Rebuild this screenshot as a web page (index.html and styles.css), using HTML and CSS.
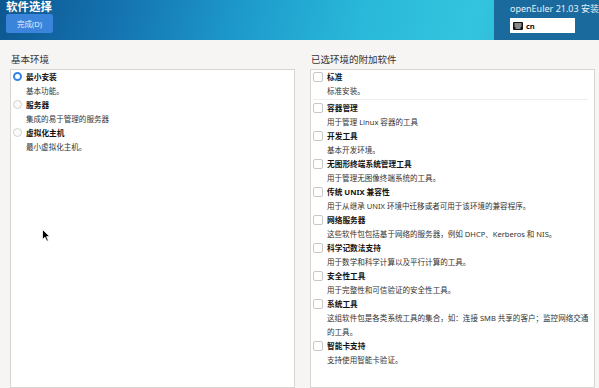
FILE: index.html
```html
<!DOCTYPE html>
<html lang="zh-CN">
<head>
  <meta charset="utf-8">
  <title>软件选择</title>
  <link rel="stylesheet" href="styles.css">
</head>
<body>
  <header class="topbar">
    <div class="topbar__left">
      <h1 class="topbar__title">软件选择</h1>
      <button class="done-btn">完成(D)</button>
    </div>
    <div class="topbar__right">
      <div class="product">openEuler 21.03 安装</div>
      <div class="kbd-box">
        <svg class="kbd-icon" width="10" height="8" viewBox="0 0 10 8">
          <rect x="0" y="0" width="10" height="8" rx="1" fill="#111"/>
          <rect x="1.5" y="1.5" width="7" height="1" fill="#fff"/>
          <rect x="1.5" y="3.5" width="7" height="1" fill="#fff"/>
          <rect x="2.5" y="5.5" width="5" height="1" fill="#fff"/>
        </svg>
        <span>cn</span>
      </div>
    </div>
  </header>

  <main class="content">
    <section class="column">
      <div class="column__label">基本环境</div>
      <div class="panel">
        <div class="item">
          <span class="radio radio--on"></span>
          <div class="item__text">
            <div class="item__title">最小安装</div>
            <div class="item__desc">基本功能。</div>
          </div>
        </div>
        <div class="item">
          <span class="radio"></span>
          <div class="item__text">
            <div class="item__title">服务器</div>
            <div class="item__desc">集成的易于管理的服务器</div>
          </div>
        </div>
        <div class="item">
          <span class="radio"></span>
          <div class="item__text">
            <div class="item__title">虚拟化主机</div>
            <div class="item__desc">最小虚拟化主机。</div>
          </div>
        </div>
      </div>
    </section>

    <section class="column">
      <div class="column__label">已选环境的附加软件</div>
      <div class="panel">
        <div class="item item--first">
          <span class="check"></span>
          <div class="item__text">
            <div class="item__title">标准</div>
            <div class="item__desc">标准安装。</div>
          </div>
        </div>
        <div class="item">
          <span class="check"></span>
          <div class="item__text">
            <div class="item__title">容器管理</div>
            <div class="item__desc">用于管理 Linux 容器的工具</div>
          </div>
        </div>
        <div class="item">
          <span class="check"></span>
          <div class="item__text">
            <div class="item__title">开发工具</div>
            <div class="item__desc">基本开发环境。</div>
          </div>
        </div>
        <div class="item">
          <span class="check"></span>
          <div class="item__text">
            <div class="item__title">无图形终端系统管理工具</div>
            <div class="item__desc">用于管理无图像终端系统的工具。</div>
          </div>
        </div>
        <div class="item">
          <span class="check"></span>
          <div class="item__text">
            <div class="item__title">传统 UNIX 兼容性</div>
            <div class="item__desc">用于从继承 UNIX 环境中迁移或者可用于该环境的兼容程序。</div>
          </div>
        </div>
        <div class="item">
          <span class="check"></span>
          <div class="item__text">
            <div class="item__title">网络服务器</div>
            <div class="item__desc">这些软件包包括基于网络的服务器，例如 DHCP、Kerberos 和 NIS。</div>
          </div>
        </div>
        <div class="item">
          <span class="check"></span>
          <div class="item__text">
            <div class="item__title">科学记数法支持</div>
            <div class="item__desc">用于数学和科学计算以及平行计算的工具。</div>
          </div>
        </div>
        <div class="item">
          <span class="check"></span>
          <div class="item__text">
            <div class="item__title">安全性工具</div>
            <div class="item__desc">用于完整性和可信验证的安全性工具。</div>
          </div>
        </div>
        <div class="item">
          <span class="check"></span>
          <div class="item__text">
            <div class="item__title">系统工具</div>
            <div class="item__desc">这组软件包是各类系统工具的集合，如：连接 SMB 共享的客户；监控网络交通的工具。</div>
          </div>
        </div>
        <div class="item">
          <span class="check"></span>
          <div class="item__text">
            <div class="item__title">智能卡支持</div>
            <div class="item__desc">支持使用智能卡验证。</div>
          </div>
        </div>
      </div>
    </section>
  </main>

  <!-- mouse pointer sitting over the left list -->
  <svg class="cursor" width="9" height="13" viewBox="0 0 9 13">
    <path d="M0.5 0.5 L0.5 10.5 L3 8.2 L4.8 12.2 L6.3 11.5 L4.6 7.6 L7.8 7.6 Z" fill="#000" stroke="#fff" stroke-width="0.8"/>
  </svg>
</body>
</html>
```

FILE: styles.css
```css
html,
body {
  margin: 0;
  height: 100%;
  overflow: hidden;
}

body {
  font-family: "Noto Sans", "Noto Sans CJK SC", sans-serif;
  background: #f6f5f4;
  color: #222;
}

/* header */
.topbar {
  height: 40px;
  display: flex;
  justify-content: space-between;
  background: linear-gradient(105deg, #0d5790 0%, #1473b0 20%, #1e9dcd 42%, #29b8d9 60%, #33c5df 78%, #26accf 100%);
}

.topbar__left {
  padding: 1px 0 0 6px;
}

.topbar__title {
  margin: 0;
  font-size: 11.5px;
  line-height: 12px;
  font-weight: bold;
  color: #fff;
}

.done-btn {
  display: block;
  margin-top: 1px;
  width: 47px;
  height: 19px;
  padding: 0;
  border: 0;
  border-radius: 2px;
  background: #3a84dc;
  color: #e8f0fb;
  font-family: inherit;
  font-size: 7.5px;
}

.topbar__right {
  width: 89px;
  background: #1b6a9e;
  padding: 3px 0 0 16px;
  overflow: hidden;
  white-space: nowrap;
}

.product {
  font-size: 9px;
  line-height: 12px;
  color: #e6f1f8;
}

.kbd-box {
  margin-top: 3px;
  width: 62px;
  height: 15px;
  background: #fff;
  display: flex;
  align-items: center;
  gap: 3px;
  padding-left: 3px;
  font-size: 7.5px;
  font-weight: bold;
  color: #111;
}

/* content */
.content {
  display: flex;
  gap: 15px;
  padding: 14px 4px 0 10px;
  height: calc(100% - 40px);
  box-sizing: border-box;
}

.column {
  flex: 1;
  display: flex;
  flex-direction: column;
}

.column__label {
  font-size: 9.5px;
  line-height: 12px;
  color: #333;
  margin-bottom: 3px;
  padding-left: 1px;
}

.panel {
  flex: 1;
  background: #fff;
  border: 1px solid #d6d5d4;
  padding: 1px 0 0 2px;
}

.item {
  display: flex;
  gap: 4px;
  padding-bottom: 1px;
}

.item--first {
  border-bottom: 1px solid #eeeeee;
  margin-bottom: 2px;
  margin-right: 6px;
}

.item__text {
  flex: 1;
}

.item__title {
  font-size: 7.7px;
  line-height: 13px;
  font-weight: bold;
  color: #111;
}

.item__desc {
  font-size: 7.55px;
  line-height: 14px;
  color: #333;
}

.radio {
  flex: none;
  width: 9px;
  height: 9px;
  margin-top: 1px;
  border-radius: 50%;
  border: 1px solid #cfcfcf;
  box-sizing: border-box;
  background: #fafafa;
}

.radio--on {
  border: 2.5px solid #3584e4;
  background: #fff;
}

.check {
  flex: none;
  width: 10px;
  height: 10px;
  margin-top: 1px;
  border: 1px solid #c8c8c8;
  border-radius: 2px;
  box-sizing: border-box;
  background: #fff;
}

.cursor {
  position: fixed;
  left: 42px;
  top: 229px;
}
```
